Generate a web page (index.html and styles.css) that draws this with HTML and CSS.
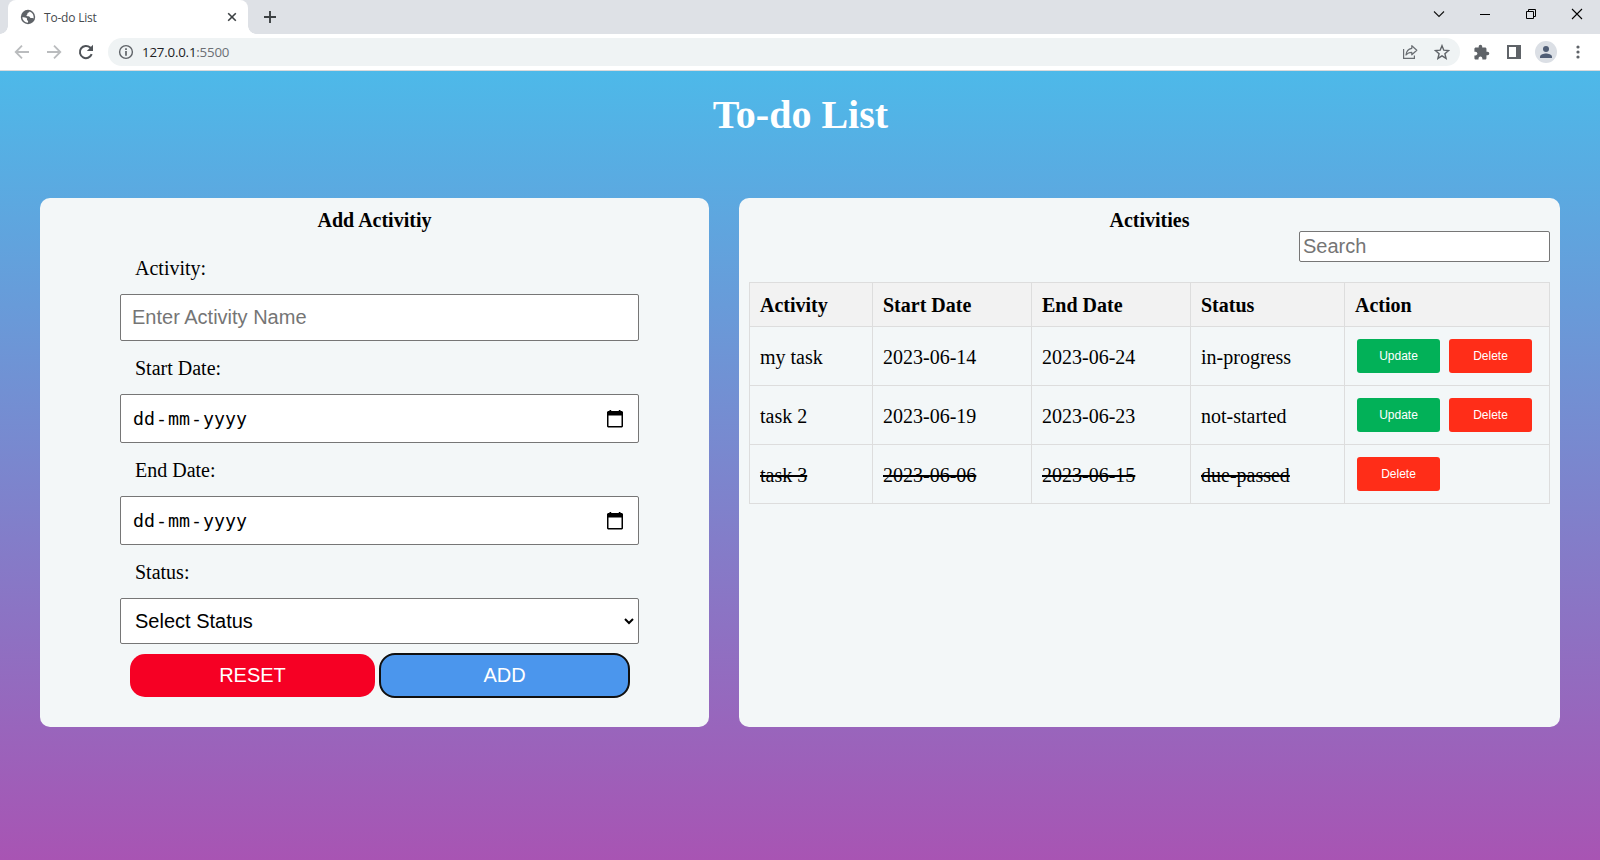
FILE: index.html
```html
<!DOCTYPE html>
<html lang="en">
<head>
<meta charset="utf-8">
<title>To-do List</title>
<link rel="stylesheet" href="styles.css">
</head>
<body>
<div class="tabbar">
  <div class="tab">
    <svg class="globe" width="16" height="16" viewBox="0 0 16 16"><circle cx="8" cy="8" r="7.2" fill="#5f6368"/><path d="M2.3 8.2c2 0 3.700 .1 4.400 .9.700.8-.2 1.900.8 2.300 1 .3.500 1.700.4 2.400A5.800 5.800 0 0 1 2.300 8.200zM9.500 2.400c-.2 1.300-1.500.8-1.900 1.700-.4.900.3 1.200-.6 1.700-.9.400-.7 1.400.4 1.500 1.500.1 2.400.3 2.700 1.200.3.900 1.500.4 2.300.4.600 0 1 .2 1.200.5.500-3.300-1.300-6.100-4.100-7z" fill="#fff"/></svg>
    <span class="tab-title">To-do List</span>
    <svg width="10" height="10" viewBox="0 0 10 10"><path d="M1.200 1.200l7.600 7.600M8.800 1.200L1.200 8.800" stroke="#3c4043" stroke-width="1.600"/></svg>
  </div>
  <svg class="plus" width="12" height="12" viewBox="0 0 12 12"><path d="M6 0v12M0 6h12" stroke="#3c4043" stroke-width="1.900"/></svg>
  <div class="window-controls">
    <svg width="12" height="12" viewBox="0 0 12 12"><path d="M1 3.500l5 5 5-5" fill="none" stroke="#111" stroke-width="1.100"/></svg>
    <svg width="12" height="12" viewBox="0 0 12 12"><path d="M1 6.500h10" stroke="#000"/></svg>
    <svg width="12" height="12" viewBox="0 0 12 12"><path d="M1.500 3.500h7v7h-7zM3.500 3.500v-2h7v7h-2" fill="none" stroke="#000"/></svg>
    <svg width="12" height="12" viewBox="0 0 12 12"><path d="M1 1l10 10M11 1L1 11" stroke="#000" stroke-width="1.100"/></svg>
  </div>
</div>
<div class="toolbar">
  <svg class="nav" width="16" height="16" viewBox="0 0 16 16"><path d="M15 8H2M8 1.700L1.700 8 8 14.300" fill="none" stroke="#babcbe" stroke-width="1.800"/></svg>
  <svg class="nav" width="16" height="16" viewBox="0 0 16 16"><path d="M1 8h13M8 1.700L14.300 8 8 14.300" fill="none" stroke="#babcbe" stroke-width="1.800"/></svg>
  <svg class="nav" width="16" height="16" viewBox="0 0 16 16"><path d="M13.700 10.200A6.100 6.100 0 1 1 12.200 3.600L14 5.500" fill="none" stroke="#4f5358" stroke-width="2"/><path d="M15 .8v6.200H8.800z" fill="#4f5358"/></svg>
  <div class="address">
    <svg width="16" height="16" viewBox="0 0 16 16"><circle cx="8" cy="8" r="6.400" fill="none" stroke="#5f6368" stroke-width="1.400"/><path d="M8 7v4.800M8 4.200v1.700" stroke="#5f6368" stroke-width="1.700"/></svg>
    <span class="url">127.0.0.1<span class="port">:5500</span></span>
    <svg class="share" width="16" height="16" viewBox="0 0 16 16"><path d="M1.600 5v9.400h10.800V11.500" fill="none" stroke="#696d72" stroke-width="1.200"/><path d="M9.800 1.700L14.800 6.300 9.800 10.800V8.300C7 8.300 5.300 9.300 4 11 4.300 7.300 6.600 4.900 9.800 4.300z" fill="none" stroke="#696d72" stroke-width="1.200" stroke-linejoin="round"/></svg>
    <svg width="16" height="16" viewBox="0 0 16 16"><path d="M8 1.700l1.800 4.500 4.800.4-3.700 3.100 1.200 4.700L8 11.900l-4.100 2.500 1.200-4.700L1.400 6.600l4.800-.4z" fill="none" stroke="#5f6368" stroke-width="1.400"/></svg>
  </div>
  <svg class="puzzle" width="17" height="17" viewBox="0 0 24 24"><path d="M20.500 11H19V7c0-1.100-.9-2-2-2h-4V3.500a2.500 2.500 0 0 0-5 0V5H4c-1.100 0-2 .9-2 2v3.800h1.500c1.500 0 2.700 1.200 2.700 2.700S5 16.200 3.500 16.200H2V20c0 1.100.9 2 2 2h3.800v-1.500c0-1.500 1.200-2.700 2.700-2.700s2.700 1.200 2.700 2.700V22H17c1.100 0 2-.9 2-2v-4h1.500a2.500 2.500 0 0 0 0-5z" fill="#5f6368"/></svg>
  <svg class="panel-icon" width="14" height="14" viewBox="0 0 14 14"><path d="M1 1h12v12H1z" fill="none" stroke="#5f6368" stroke-width="2"/><path d="M9 0h5v14H9z" fill="#5f6368"/></svg>
  <svg class="avatar" width="22" height="22" viewBox="0 0 22 22"><circle cx="11" cy="11" r="11" fill="#dbdfe5"/><circle cx="11" cy="8" r="3" fill="#4f5d75"/><path d="M5 17v-1.300c0-2.100 3.900-3.200 6-3.200s6 1.100 6 3.200V17z" fill="#4f5d75"/></svg>
  <svg class="menu" width="4" height="14" viewBox="0 0 4 14"><circle cx="2" cy="2" r="1.600" fill="#5f6368"/><circle cx="2" cy="7" r="1.600" fill="#5f6368"/><circle cx="2" cy="12" r="1.600" fill="#5f6368"/></svg>
</div>
<main class="page">
  <h1 class="title">To-do List</h1>
  <div class="columns">
    <section class="card form-card">
      <h2 class="card-title">Add Activitiy</h2>
      <form class="form">
        <label class="label">Activity:</label>
        <input class="field name-field" type="text" placeholder="Enter Activity Name">
        <label class="label">Start Date:</label>
        <div class="field date-field">
          <span class="date">dd<i>-</i>mm<i>-</i>yyyy</span>
          <svg width="16" height="18" viewBox="0 0 16 18"><path d="M2.500 0h1.700v1h7.600V0h1.700v1H15l1 1v14.500l-1 1H1l-1-1V2l1-1h1.500zM1.500 5.500v10.600h13V5.500z" fill="#000" fill-rule="evenodd"/></svg>
        </div>
        <label class="label">End Date:</label>
        <div class="field date-field">
          <span class="date">dd<i>-</i>mm<i>-</i>yyyy</span>
          <svg width="16" height="18" viewBox="0 0 16 18"><path d="M2.500 0h1.700v1h7.600V0h1.700v1H15l1 1v14.500l-1 1H1l-1-1V2l1-1h1.500zM1.500 5.500v10.600h13V5.500z" fill="#000" fill-rule="evenodd"/></svg>
        </div>
        <label class="label">Status:</label>
        <div class="field select-field">
          <span>Select Status</span>
          <svg width="10" height="7" viewBox="0 0 10 7"><path d="M1 1l4 4 4-4" fill="none" stroke="#000" stroke-width="2"/></svg>
        </div>
        <div class="form-buttons">
          <button class="btn reset" type="button">RESET</button>
          <button class="btn add" type="button">ADD</button>
        </div>
      </form>
    </section>
    <section class="card list-card">
      <h2 class="card-title">Activities</h2>
      <input class="search" type="text" placeholder="Search">
      <table class="table">
        <colgroup><col class="c1"><col class="c2"><col class="c2"><col class="c3"><col class="c4"></colgroup>
        <tr><th>Activity</th><th>Start Date</th><th>End Date</th><th>Status</th><th>Action</th></tr>
        <tr><td>my task</td><td>2023-06-14</td><td>2023-06-24</td><td>in-progress</td><td><div class="actions"><button class="act update">Update</button><button class="act delete">Delete</button></div></td></tr>
        <tr><td>task 2</td><td>2023-06-19</td><td>2023-06-23</td><td>not-started</td><td><div class="actions"><button class="act update">Update</button><button class="act delete">Delete</button></div></td></tr>
        <tr class="passed"><td>task 3</td><td>2023-06-06</td><td>2023-06-15</td><td>due-passed</td><td><div class="actions"><button class="act delete">Delete</button></div></td></tr>
      </table>
    </section>
  </div>
</main>
</body>
</html>
```
FILE: styles.css
```css
* { box-sizing: border-box; }
body { margin: 0; height: 860px; overflow: hidden; font-family: "Liberation Serif", serif; font-size: 20px; color: #000; display: flex; flex-direction: column; }
svg { display: block; flex: none; }

.tabbar { height: 34px; flex: none; background: #dee1e6; display: flex; padding-left: 8px; }
.tab { width: 240px; height: 34px; background: #fff; border-radius: 8px 8px 0 0; display: flex; align-items: center; padding: 0 11px 0 12px; position: relative; }
.tab::before, .tab::after { content: ""; position: absolute; bottom: 0; width: 8px; height: 8px; }
.tab::before { left: -8px; background: radial-gradient(circle at 0 0, transparent 7.5px, #fff 8px); }
.tab::after { right: -8px; background: radial-gradient(circle at 100% 0, transparent 7.5px, #fff 8px); }
.tab-title { font: 12px "Open Sans", sans-serif; color: #45494d; margin-left: 8px; flex: 1; letter-spacing: -0.2px; }
.plus { margin: 11px 0 0 16px; }
.window-controls { margin: 8px 17px 0 auto; display: flex; gap: 34px; }

.toolbar { height: 37px; flex: none; background: #fff; border-bottom: 1px solid #d9dadc; display: flex; align-items: center; padding-left: 14px; }
.nav { margin-right: 16px; }
.address { width: 1352px; height: 28px; margin-left: -2px; border-radius: 14px; background: #eff3f4; display: flex; align-items: center; padding: 0 10px; }
.url { font: 13.300px "Open Sans", sans-serif; color: #202124; margin-left: 8px; letter-spacing: -0.2px; }
.port { color: #6b6f74; }
.share { margin: 0 16px 0 auto; }
.puzzle { margin-left: 13px; }
.panel-icon { margin-left: 17px; }
.avatar { margin-left: 14px; }
.menu { margin-left: 19px; }

.page { flex: 1; padding: 20px 40px 0; background: linear-gradient(#4db9e9, #a854b3); }
.title { margin: 0; height: 107px; padding: 1px 0 0 1px; font-size: 40px; line-height: 46px; text-align: center; color: #fff; }
.columns { display: flex; gap: 30px; }
.card { height: 529px; background: #f3f7f8; border-radius: 10px; padding: 10px; }
.form-card { width: 669px; }
.list-card { width: 821px; display: flex; flex-direction: column; }
.card-title { margin: 0; height: 23px; font-size: 20px; line-height: 25px; text-align: center; }

.form { width: 519px; margin: 10px 0 0 70px; display: flex; flex-direction: column; }
.label { height: 53px; padding: 16px 15px 0; line-height: 23px; }
.field { border: 1px solid #767676; border-radius: 2px; background: #fff; font: 20px "Liberation Sans", sans-serif; padding: 0 10px; width: 100%; }
.name-field { height: 47px; padding-left: 11px; }
.name-field::placeholder, .search::placeholder { color: #757575; opacity: 1; }
.date-field { height: 49px; display: flex; align-items: center; justify-content: space-between; padding: 0 15px 0 12px; }
.date { font: 18.270px "DejaVu Sans Mono", monospace; }
.date i { font-style: normal; margin: 0 1px; }
.select-field { height: 46px; display: flex; align-items: center; justify-content: space-between; padding: 0 4px 0 14px; }
.form-buttons { display: flex; gap: 4px; padding: 9px 9px 0 10px; align-items: center; }
.btn { border: 0; padding: 0; font: 20px "Liberation Sans", sans-serif; color: #fff; border-radius: 15px; }
.reset { width: 245px; height: 43px; background: #f60024; }
.add { width: 251px; height: 45px; background: #4b96ed; border: 2px solid #101010; border-radius: 16px; }

.search { align-self: flex-end; width: 251px; height: 31px; border: 1px solid #767676; border-radius: 2px; background: #fff; padding: 0 3px; font: 20px "Liberation Sans", sans-serif; }
.table { width: 800px; margin-top: 20px; table-layout: fixed; border-collapse: collapse; }
.c1 { width: 123px; }
.c2 { width: 159px; }
.c3 { width: 154px; }
.c4 { width: 205px; }
th, td { border: 1px solid #ddd; padding: 2px 10px 0; text-align: left; height: 59px; line-height: 23px; }
th { height: 44px; background: #f2f2f2; }
td:last-child { padding-top: 0; }
.passed td:not(:last-child) { text-decoration: line-through; text-decoration-thickness: 2px; }
.actions { display: flex; gap: 9px; padding-left: 2px; }
.act { width: 83px; height: 34px; border: 0; border-radius: 3px; padding: 0; color: #fff; font: 12px "Liberation Sans", sans-serif; }
.update { background: #02b158; }
.delete { background: #ff2d18; }
```
